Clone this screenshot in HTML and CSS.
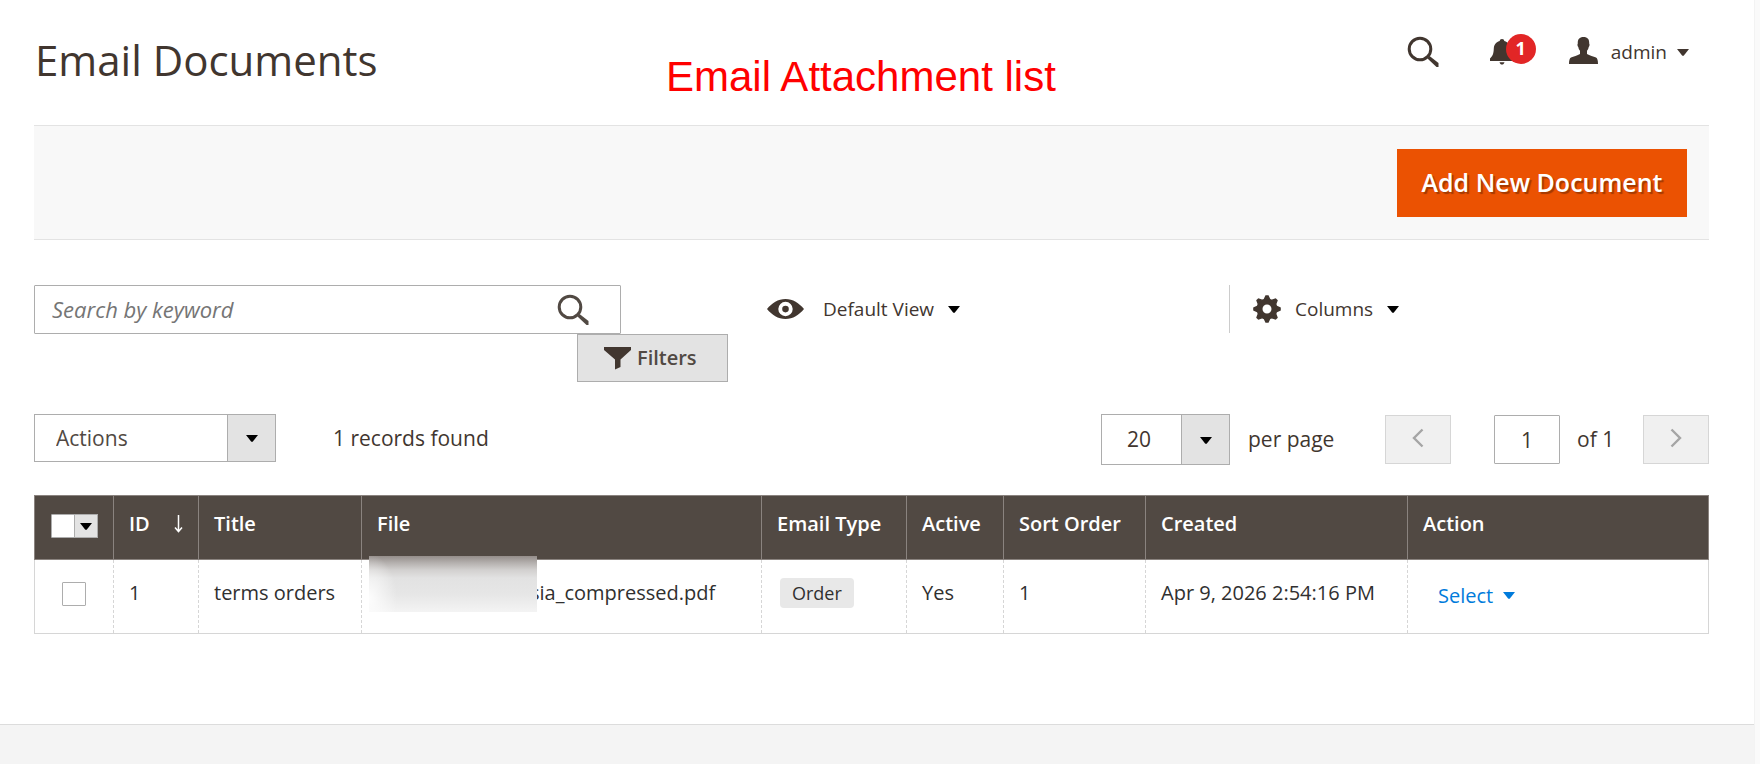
FILE: index.html
```html
<!DOCTYPE html>
<html lang="en">
<head>
<meta charset="utf-8">
<meta name="viewport" content="width=device-width, initial-scale=1">
<title>Email Documents</title>
<link rel="stylesheet" href="styles.css">
</head>
<body>
<svg class="sprite" aria-hidden="true">
  <symbol id="icon-search" viewBox="0 0 32 32"><circle cx="13" cy="13" r="10.8" fill="none" stroke="currentColor" stroke-width="3"/><path d="M20.500 22.500 L22.500 20 L31.500 27 V31 H29.500 Z" fill="currentColor"/></symbol>
  <symbol id="icon-caret" viewBox="0 0 12 7"><path d="M0 0H12L6.700 6.700H5.300Z" fill="currentColor"/></symbol>
</svg>
<div class="page">
  <header class="header">
    <h1 class="title">Email Documents</h1>
    <p class="caption">Email Attachment list</p>
    <div class="account">
      <button class="icon-button" type="button" aria-label="Search"><svg class="icon-search"><use href="#icon-search"/></svg></button>
      <button class="icon-button notifications" type="button" aria-label="Notifications">
        <svg class="icon-bell" viewBox="0 0 24 26"><path d="M12 0c1.500 0 2.200.8 2.300 1.900C18.500 3 20 6 20.200 9.500c.2 5 1 7.500 3.800 10V22H0v-2.500c2.800-2.500 3.600-5 3.800-10C4 6 5.500 3 9.700 1.900 9.800.8 10.500 0 12 0zM9.500 23.200h5C14 24.800 13.200 25.500 12 25.500s-2-.7-2.500-2.300z" fill="currentColor"/></svg>
        <span class="badge">1</span>
      </button>
      <button class="icon-button user" type="button">
        <svg class="icon-user" viewBox="0 0 29 27"><path d="M14.500 0c4 0 6 2.300 5.700 6.500.6.900.4 2.800-.5 3.600-.3 1.700-.9 2.800-1.700 3.700v3.100c2.500 1.700 6.500 2.100 9 3.600 1.400.9 2 2.700 2 6.500H0c0-3.800.6-5.600 2-6.500 2.500-1.500 6.500-1.900 9-3.600v-3.100c-.8-.9-1.400-2-1.700-3.700-.9-.8-1.100-2.700-.5-3.600C8.500 2.300 10.500 0 14.500 0z" fill="currentColor"/></svg>
        <span>admin</span>
        <svg class="caret"><use href="#icon-caret"/></svg>
      </button>
    </div>
  </header>

  <div class="page-actions"><button class="primary" type="button">Add New Document</button></div>

  <div class="toolbar">
    <div class="finder">
      <div class="search">
        <input class="search-input" type="text" placeholder="Search by keyword" aria-label="Search by keyword">
        <button class="icon-button" type="button" aria-label="Submit search"><svg class="icon-search"><use href="#icon-search"/></svg></button>
      </div>
      <button class="filters" type="button"><svg class="icon-funnel" viewBox="0 0 27 23"><path d="M0 0H27V3L16.500 12.500V20L11 22.500V12.500L0 3Z" fill="currentColor"/></svg>Filters</button>
    </div>
    <button class="menu view" type="button">
      <svg class="icon-eye" viewBox="0 0 37 20"><path fill-rule="evenodd" d="M0 10C5 4 11 0 18.500 0S32 4 37 10C32 16 26 20 18.500 20S5 16 0 10zM18.500 2.800a7.200 7.200 0 1 0 0 14.400a7.200 7.200 0 1 0 0-14.400zM18.500 6.800a3.300 3.300 0 1 1 0 6.600a3.300 3.300 0 1 1 0-6.600z" fill="currentColor"/></svg>
      <span>Default View</span>
      <svg class="caret"><use href="#icon-caret"/></svg>
    </button>
    <div class="columns">
      <button class="menu" type="button">
        <svg class="icon-gear" viewBox="-14 -14 28 28"><g fill="currentColor"><path fill-rule="evenodd" d="M0-10.500a10.500 10.500 0 1 0 0 21a10.500 10.500 0 1 0 0-21zM0-4.500a4.500 4.500 0 1 1 0 9a4.500 4.500 0 1 1 0-9z"/><path id="tooth" d="M-3.500-9.500L-1.500-13.800H1.500L3.500-9.500Z"/><use href="#tooth" transform="rotate(45)"/><use href="#tooth" transform="rotate(90)"/><use href="#tooth" transform="rotate(135)"/><use href="#tooth" transform="rotate(180)"/><use href="#tooth" transform="rotate(225)"/><use href="#tooth" transform="rotate(270)"/><use href="#tooth" transform="rotate(315)"/></g></svg>
        <span>Columns</span>
        <svg class="caret"><use href="#icon-caret"/></svg>
      </button>
    </div>
  </div>

  <div class="grid-controls">
    <div class="select-box actions">
      <select aria-label="Actions"><option>Actions</option></select>
      <svg class="caret"><use href="#icon-caret"/></svg>
    </div>
    <p class="records">1 records found</p>
    <div class="pager">
      <div class="select-box size">
        <select id="page-size"><option>20</option></select>
        <svg class="caret"><use href="#icon-caret"/></svg>
      </div>
      <label class="per-page" for="page-size">per page</label>
      <button class="step" type="button" disabled aria-label="Previous page"><svg class="chevron" viewBox="0 0 12 20"><path d="M10.500 1.500L2 10L10.500 18.500" fill="none" stroke="currentColor" stroke-width="2.400"/></svg></button>
      <input class="current" id="page-number" type="text" value="1">
      <label class="total" for="page-number">of 1</label>
      <button class="step" type="button" disabled aria-label="Next page"><svg class="chevron" viewBox="0 0 12 20"><path d="M1.500 1.500L10 10L1.500 18.500" fill="none" stroke="currentColor" stroke-width="2.400"/></svg></button>
    </div>
  </div>

  <table class="grid">
    <colgroup><col class="c-check"><col class="c-id"><col class="c-title"><col class="c-file"><col class="c-type"><col class="c-active"><col class="c-sort"><col class="c-created"><col></colgroup>
    <thead>
      <tr>
        <th><div class="multi"><input class="check" type="checkbox" aria-label="Select all"><button class="multi-toggle" type="button" aria-label="Selection options"><svg class="caret"><use href="#icon-caret"/></svg></button></div></th>
        <th><div class="sorted"><span>ID</span><svg class="arrow" viewBox="0 0 9 18"><path d="M4.500 0V16.500M1 12.500L4.500 16.500L8 12.500" fill="none" stroke="currentColor" stroke-width="1.500"/></svg></div></th>
        <th>Title</th><th>File</th><th>Email Type</th><th>Active</th><th>Sort Order</th><th>Created</th><th>Action</th>
      </tr>
    </thead>
    <tbody>
      <tr>
        <td class="check-cell"><input class="check" type="checkbox" aria-label="Select row"></td>
        <td>1</td>
        <td>terms orders</td>
        <td class="file"><span class="file-name">sia_compressed.pdf</span><span class="redaction"></span></td>
        <td><span class="tag">Order</span></td>
        <td>Yes</td>
        <td>1</td>
        <td>Apr 9, 2026 2:54:16 PM</td>
        <td class="action-cell"><button class="row-select" type="button">Select<svg class="caret"><use href="#icon-caret"/></svg></button></td>
      </tr>
    </tbody>
  </table>
  <footer class="footer"></footer>
</div>
</body>
</html>
```
FILE: styles.css
```css
* { box-sizing: border-box; }

body {
  margin: 0;
  background: #fafafa;
  color: #41362f;
  font-family: "Open Sans", "Noto Sans", sans-serif;
  font-size: 20px;
  line-height: 28px;
}

button, input, select { margin: 0; font: inherit; color: inherit; }
button { padding: 0; border: 0; background: none; cursor: pointer; }
svg { display: block; flex: none; }
p, h1 { margin: 0; }

.sprite { position: absolute; width: 0; height: 0; }
.caret { width: 12px; height: 7px; }
.icon-search { width: 32px; height: 32px; }

.page {
  display: flex;
  flex-direction: column;
  min-height: 100vh;
  margin-right: 5px;
  padding: 0 45px 0 34px;
  border-right: 1px solid #f3f3f3;
  background: #fff;
}

.header {
  display: flex;
  align-items: flex-start;
  height: 125px;
  padding-right: 20px;
}
.title {
  width: 632px;
  padding: 31px 0 0 1px;
  font-size: 42px;
  font-weight: 400;
  line-height: 58px;
}
.caption {
  padding-top: 53px;
  color: #f00;
  font-family: "Liberation Sans", Arial, sans-serif;
  font-size: 42px;
  line-height: 48px;
}
.account { display: flex; margin-left: auto; padding-top: 36px; font-size: 19px; }
.notifications { position: relative; margin-left: 51px; padding-top: 3px; align-self: flex-start; }
.icon-bell { width: 24px; height: 26px; }
.badge {
  position: absolute;
  top: -2px;
  left: 16px;
  width: 30px;
  height: 30px;
  border-radius: 50%;
  background: #e22626;
  color: #fff;
  font-size: 18px;
  font-weight: 700;
  line-height: 29px;
  text-align: center;
}
.user { display: flex; align-items: center; margin-left: 55px; height: 32px; }
.icon-user { width: 29px; height: 27px; margin: -4px 13px 0 0; }
.user .caret { margin-left: 10px; }

.page-actions {
  display: flex;
  justify-content: flex-end;
  padding: 23px 22px 22px;
  border: solid #e3e3e3;
  border-width: 1px 0;
  background: #f8f8f8;
}
.primary {
  width: 290px;
  height: 68px;
  padding-bottom: 2px;
  background: #eb5202;
  color: #fff;
  font-size: 25px;
  font-weight: 600;
  text-shadow: 2px 2px 1px rgba(0, 0, 0, 0.3);
}

.toolbar { display: flex; align-items: flex-start; padding-top: 45px; }
.finder { display: flex; flex-direction: column; flex: 0 1 694px; }
.search {
  display: flex;
  align-items: center;
  height: 49px;
  margin-right: 107px;
  padding-right: 31px;
  border: 1px solid #adadad;
  border-radius: 1px;
}
.search-input { flex: 1; min-width: 0; padding: 0 17px 2px; border: 0; outline: 0; background: none; font-size: 22px; }
.search-input::placeholder { color: #757575; font-style: italic; opacity: 1; }
.search .icon-button { color: #514943; }
.filters {
  display: flex;
  align-items: center;
  align-self: flex-end;
  gap: 6px;
  width: 151px;
  height: 48px;
  padding-left: 26px;
  border: 1px solid #adadad;
  background: #e3e3e3;
  color: #514943;
  font-weight: 600;
}
.icon-funnel { width: 27px; height: 23px; color: #41362f; }
.menu { display: flex; align-items: center; height: 48px; color: #41362f; font-size: 19px; }
.menu .caret { margin-left: 14px; color: #000; }
.view { margin-left: 39px; }
.icon-eye { width: 37px; height: 20px; margin-right: 19px; }
.columns { flex: 0 1 480px; margin-left: auto; padding-left: 23px; border-left: 1px solid #ccc; }
.icon-gear { width: 28px; height: 28px; margin-right: 14px; }

.grid-controls { display: flex; align-items: flex-start; padding: 32px 0 30px; font-size: 21px; }
.select-box { position: relative; border: 1px solid #adadad; }
.select-box select {
  width: 100%;
  height: 100%;
  border: 0;
  appearance: none;
  background: linear-gradient(to left, #e3e3e3 47px, #adadad 47px, #adadad 48px, #fff 48px);
}
.select-box .caret { position: absolute; top: calc(50% - 3px); right: 17px; color: #000; pointer-events: none; }
.actions { width: 242px; height: 48px; color: #514943; }
.actions select { padding: 0 21px; }
.records { margin-left: 57px; line-height: 48px; }
.pager { display: flex; align-items: center; margin-left: auto; }
.size { width: 129px; height: 51px; }
.size select { padding: 0 25px 2px; }
.per-page { width: 155px; padding: 0 0 2px 18px; }
.step, .current { width: 66px; height: 49px; }
.step { display: flex; align-items: center; justify-content: center; border: 1px solid #d6d6d6; background: #f0f0f0; color: #a5a5a5; }
.chevron { width: 12px; height: 20px; margin-bottom: 4px; }
.current { margin-left: 43px; border: 1px solid #adadad; border-radius: 1px; background: #fff; text-align: center; }
.total { width: 83px; padding: 0 0 2px 17px; }

.grid { width: 100%; table-layout: fixed; border-collapse: collapse; }
.c-check { width: 79px; }
.c-id { width: 85px; }
.c-title { width: 163px; }
.c-file { width: 400px; }
.c-type { width: 145px; }
.c-active { width: 97px; }
.c-sort { width: 142px; }
.c-created { width: 262px; }
.grid th {
  height: 64px;
  padding: 14px 15px 21px;
  border: 1px solid #8a837f;
  background: #514943;
  color: #fff;
  font-weight: 600;
  text-align: left;
  white-space: nowrap;
}
.grid td {
  height: 74px;
  padding: 18px 15px 25px;
  border: 1px dashed #d6d6d6;
  border-bottom-style: solid;
  color: #303030;
  white-space: nowrap;
}
.grid td:first-child { border-left-style: solid; }
.grid td:last-child { border-right-style: solid; }
.check {
  display: block;
  width: 24px;
  height: 24px;
  border: 1px solid #adadad;
  border-radius: 1px;
  appearance: none;
  background: #fff;
}
.grid .check-cell { padding: 16px 27px 22px; }
.multi { display: flex; width: 47px; margin: 4px 0 0 1px; }
.multi-toggle { display: flex; align-items: center; justify-content: center; width: 24px; height: 24px; margin-left: -1px; border: 1px solid #adadad; background: #e3e3e3; color: #000; }
.sorted { display: flex; align-items: center; justify-content: space-between; }
.arrow { width: 9px; height: 18px; }
.grid .file { position: relative; }
.file-name { padding-left: 153px; }
.redaction {
  position: absolute;
  top: -4px;
  left: 7px;
  width: 168px;
  height: 56px;
  background:
    radial-gradient(ellipse 28px 44px at 0 42px, rgba(255, 255, 255, 0.9), rgba(255, 255, 255, 0)),
    linear-gradient(#948d8a, #b5b1af 7px, #d2d0cf 14px, #e2e2e2 22px, #e6e6e6 38px, #f3f3f3 55px);
}
.tag { display: inline-block; margin-left: 3px; padding: 0 12px; border-radius: 4px; background: #e8e8e8; font-size: 18px; line-height: 30px; }
.grid .action-cell { padding: 20px 30px 22px; }
.row-select { display: flex; align-items: center; gap: 10px; color: #007bdb; }

.footer {
  flex: 1;
  min-height: 40px;
  margin: 90px -45px 0 -34px;
  border-top: 1px solid #dcdcdc;
  background: #f4f4f4;
}
```
